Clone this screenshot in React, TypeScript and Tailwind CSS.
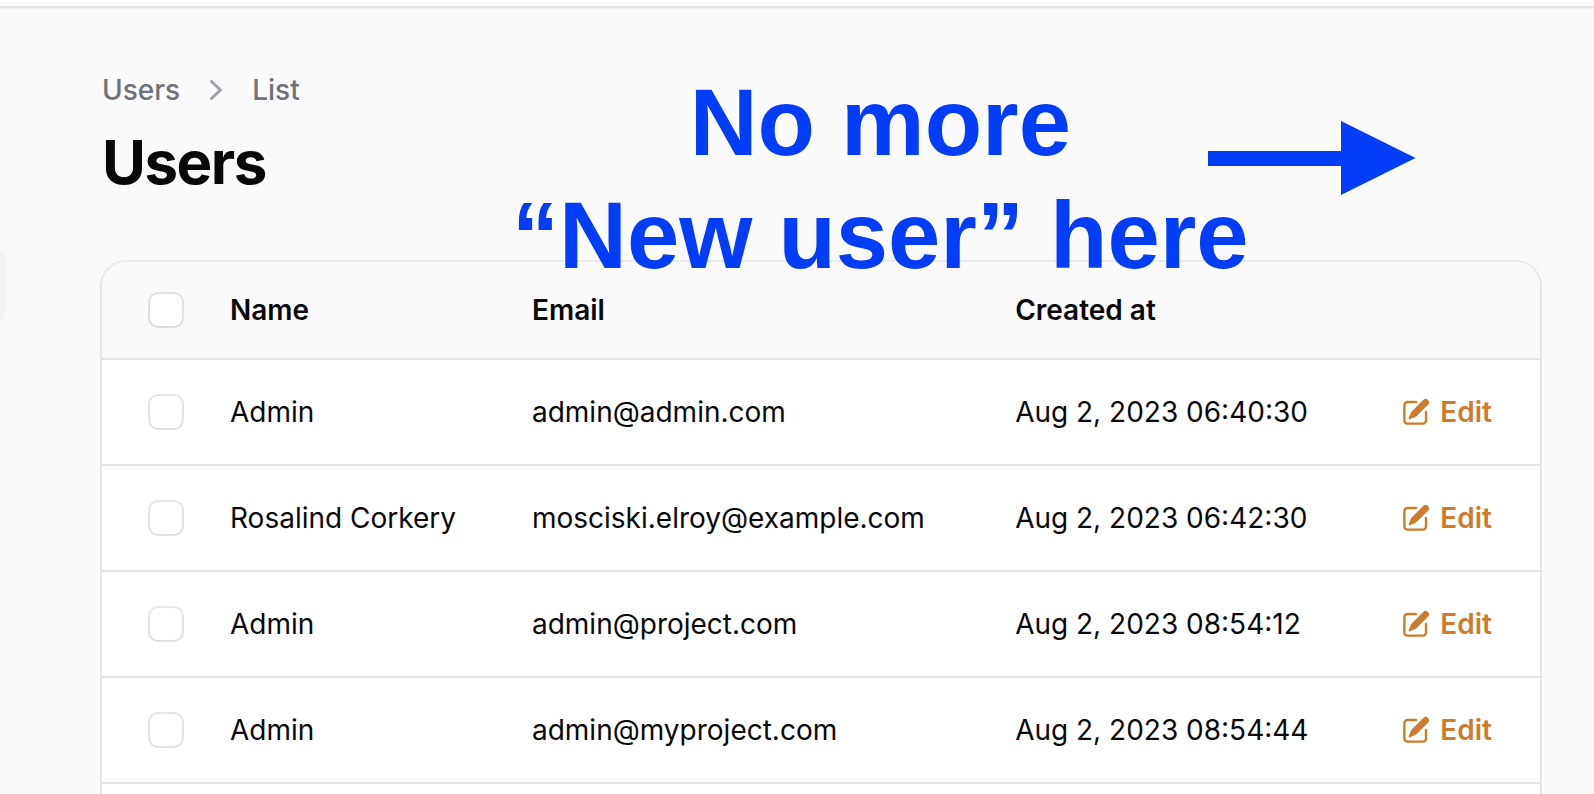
const users = [
  { name: "Admin", email: "admin@admin.com", createdAt: "Aug 2, 2023 06:40:30" },
  { name: "Rosalind Corkery", email: "mosciski.elroy@example.com", createdAt: "Aug 2, 2023 06:42:30" },
  { name: "Admin", email: "admin@project.com", createdAt: "Aug 2, 2023 08:54:12" },
  { name: "Admin", email: "admin@myproject.com", createdAt: "Aug 2, 2023 08:54:44" },
];

function ChevronRight() {
  return (
    <svg viewBox="0 0 20 20" fill="currentColor" className="size-10 text-zinc-400" aria-hidden="true">
      <path
        fillRule="evenodd"
        clipRule="evenodd"
        d="M7.21 14.77a.75.75 0 0 1 .02-1.06L11.168 10 7.23 6.29a.75.75 0 1 1 1.04-1.08l4.5 4.25a.75.75 0 0 1 0 1.08l-4.5 4.25a.75.75 0 0 1-1.06-.02Z"
      />
    </svg>
  );
}

function PencilSquare() {
  return (
    <svg viewBox="0 0 20 20" fill="currentColor" className="size-8" aria-hidden="true">
      <path d="m5.433 13.917 1.262-3.155A4 4 0 0 1 7.58 9.42l6.92-6.918a2.121 2.121 0 0 1 3 3l-6.92 6.918c-.383.383-.84.685-1.343.886l-3.154 1.262a.5.5 0 0 1-.65-.65Z" />
      <path d="M3.5 5.75c0-.69.56-1.25 1.25-1.25H10A.75.75 0 0 0 10 3H4.75A2.75 2.75 0 0 0 2 5.75v9.5A2.75 2.75 0 0 0 4.75 18h9.5A2.75 2.75 0 0 0 17 15.25V10a.75.75 0 0 0-1.5 0v5.25c0 .69-.56 1.25-1.25 1.25h-9.5c-.69 0-1.25-.56-1.25-1.25v-9.5Z" />
    </svg>
  );
}

function Checkbox({ label }: { label: string }) {
  return (
    <input
      type="checkbox"
      aria-label={label}
      className="block size-8 appearance-none rounded-lg bg-white shadow-xs ring-2 ring-zinc-950/10 checked:bg-amber-600"
    />
  );
}

function Callout() {
  return (
    <div className="pointer-events-none absolute top-[66px] left-[512px] text-[#033df8]">
      <p className="text-center font-['Liberation_Sans',sans-serif] text-[94px] leading-[113px] font-bold whitespace-nowrap">
        No more
        <br />
        “New user” here
      </p>
      <svg viewBox="0 0 208 74" fill="currentColor" className="absolute top-[55px] left-[696px] h-[74px] w-[208px]" aria-hidden="true">
        <path d="M0 30H133V0L207.500 37L133 74V45H0Z" />
      </svg>
    </div>
  );
}

export default function App() {
  return (
    <div className="relative flex h-screen flex-col overflow-hidden bg-[#fafafa] font-['Inter',sans-serif] text-[28px] leading-10 text-zinc-950">
      <header className="h-2 shrink-0 border-b-2 border-[#e4e4e5] bg-white shadow-xs" />
      <div className="flex min-h-0 flex-1">
        <aside className="w-[6px] shrink-0 pt-[238px]">
          <div className="-ml-10 h-20 rounded-r-2xl bg-zinc-100" />
        </aside>
        <main className="flex min-w-0 flex-1 flex-col pt-[62px] pr-[54px] pl-24">
          <nav aria-label="Breadcrumb" className="flex items-center gap-4 font-medium text-zinc-500">
            <a href="#users">Users</a>
            <ChevronRight />
            <a href="#list">List</a>
          </nav>
          <h1 className="mt-4 text-[60px] leading-[72px] font-bold tracking-tight">Users</h1>
          <section className="mt-16 min-h-0 flex-1 overflow-clip rounded-t-3xl bg-white shadow-sm ring-2 ring-zinc-950/5">
            <table className="w-full table-fixed border-separate border-spacing-0 text-left whitespace-nowrap">
              <colgroup>
                <col className="w-[104px]" />
                <col className="w-[21%]" />
                <col className="w-[33.6%]" />
                <col />
                <col className="w-[166px]" />
              </colgroup>
              <thead className="bg-[#fafafa]">
                <tr className="[&>th]:h-[98px] [&>th]:border-b-2 [&>th]:border-zinc-200">
                  <th className="pl-12">
                    <Checkbox label="Select all" />
                  </th>
                  <th className="px-6 font-semibold">Name</th>
                  <th className="px-6 font-semibold">Email</th>
                  <th className="px-6 font-semibold">Created at</th>
                  <th aria-label="Actions" />
                </tr>
              </thead>
              <tbody>
                {users.map((user) => (
                  <tr key={user.email} className="[&>td]:h-[106px] [&>td]:border-b-2 [&>td]:border-zinc-200">
                    <td className="pl-12">
                      <Checkbox label={`Select ${user.email}`} />
                    </td>
                    <td className="px-6">{user.name}</td>
                    <td className="px-6">{user.email}</td>
                    <td className="px-6">{user.createdAt}</td>
                    <td className="pr-12">
                      <a href="#edit" className="flex items-center justify-end gap-2 font-semibold text-[#cd7b2d]">
                        <PencilSquare />
                        Edit
                      </a>
                    </td>
                  </tr>
                ))}
              </tbody>
            </table>
          </section>
        </main>
      </div>
      <Callout />
    </div>
  );
}
